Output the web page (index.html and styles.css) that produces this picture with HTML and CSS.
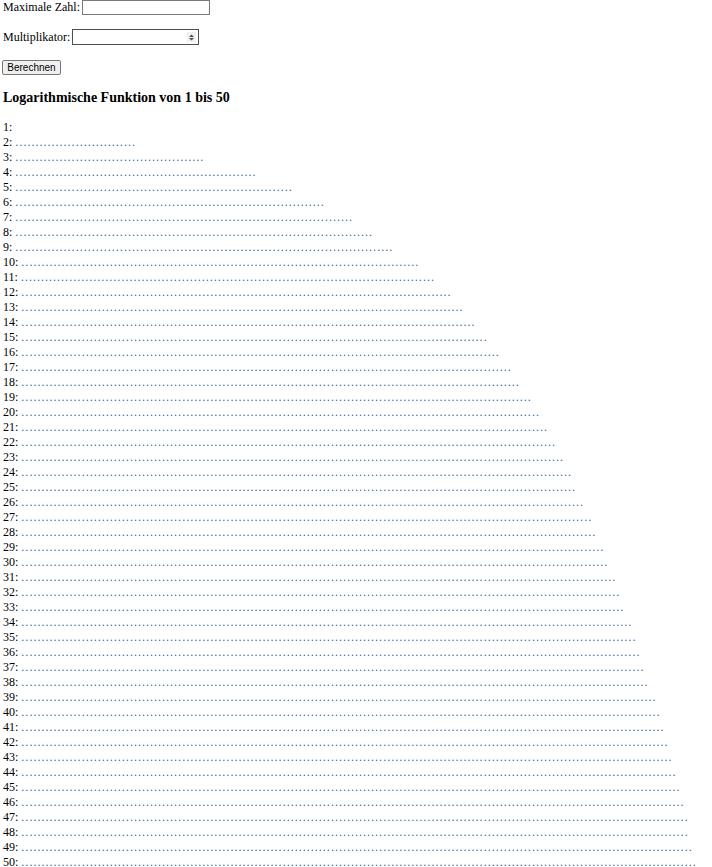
FILE: index.html
```html
<!DOCTYPE html>
<html lang="de">
<head>
<meta charset="utf-8">
<title>Logarithmische Funktion</title>
<link rel="stylesheet" href="styles.css">
</head>
<body>
<form class="form">
  <div class="row row-max">
    <label class="lbl" for="max">Maximale Zahl:</label>
    <input class="field" id="max" type="text">
  </div>
  <div class="row row-mult">
    <label class="lbl" for="mult">Multiplikator:</label>
    <span class="spin">
      <span class="spin-btn"><svg width="5" height="7" viewBox="0 0 5 7"><polygon points="2.5,0.5 5,3 0,3" fill="#4d4d4d"/><polygon points="0,4 5,4 2.5,6.5" fill="#4d4d4d"/></svg></span>
    </span>
  </div>
  <div class="row row-btn">
    <button class="btn" type="button">Berechnen</button>
  </div>
</form>
<h3 class="title">Logarithmische Funktion von 1 bis 50</h3>
<div class="list" id="list"></div>
<script src="script.js"></script>
</body>
</html>
```
FILE: styles.css
```css
html, body {
  margin: 0;
  padding: 0;
  background: #fff;
}
body {
  padding: 0 3px;
  font-family: "Liberation Serif", "Times New Roman", serif;
  font-size: 12px;
  color: #000;
}
.form {
  display: flex;
  flex-direction: column;
  margin: 0;
}
.row {
  display: flex;
  align-items: center;
  gap: 2px;
}
.row-max {
  height: 15px;
}
.row-mult {
  height: 16px;
  margin-top: 14px;
}
.row-btn {
  height: 15px;
  margin-top: 15px;
  margin-left: -1px;
}
.lbl {
  line-height: 15px;
}
.field {
  box-sizing: border-box;
  width: 128px;
  height: 15px;
  margin: 0;
  padding: 0;
  border: 1px solid #7a7a7a;
  background: #fff;
  outline: none;
}
.spin {
  box-sizing: border-box;
  width: 127px;
  height: 16px;
  border: 1px solid #4f4f4f;
  background: #fff;
  display: flex;
  justify-content: flex-end;
  align-items: center;
  padding-right: 2px;
}
.spin-btn {
  width: 9px;
  height: 10px;
  background: #f0f0f0;
  display: flex;
  align-items: center;
  justify-content: center;
}
.btn {
  box-sizing: border-box;
  height: 15px;
  width: 59px;
  margin: 0;
  padding: 0 4px;
  font-family: "Liberation Sans", Arial, sans-serif;
  font-size: 10px;
  line-height: 13px;
  color: #000;
  background: #efefef;
  border: 1px solid #767676;
  border-radius: 2px;
}
.title {
  margin: 15px 0 14px;
  font-size: 14px;
  line-height: 16px;
  font-weight: bold;
}
.list {
  line-height: 15px;
}
.line {
  white-space: nowrap;
}
.dots {
  letter-spacing: 1.02px;
  color: #2f6aa8;
}
```
FILE: script.js
```js
(function () {
  var list = document.getElementById('list');
  for (var i = 1; i <= 50; i++) {
    var line = document.createElement('div');
    line.className = 'line';
    line.appendChild(document.createTextNode(i + ': '));
    var dots = document.createElement('span');
    dots.className = 'dots';
    dots.textContent = '.'.repeat(Math.round(43 * Math.log(i)));
    line.appendChild(dots);
    list.appendChild(line);
  }
})();
```
